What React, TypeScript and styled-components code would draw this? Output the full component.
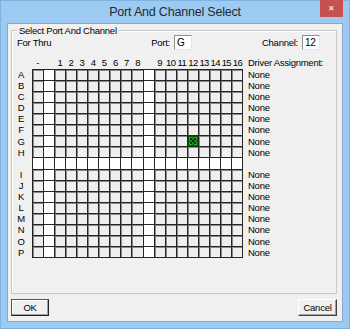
import React from 'react'
import styled, { createGlobalStyle } from 'styled-components'

const columns = ['-', '', '1', '2', '3', '4', '5', '6', '7', '8', '', '9', '10', '11', '12', '13', '14', '15', '16']
const rows = ['A', 'B', 'C', 'D', 'E', 'F', 'G', 'H', '', 'I', 'J', 'K', 'L', 'M', 'N', 'O', 'P']

const selectedRow = 'G'
const selectedCol = '12'

const App = () => {
  return (
    <>
      <GlobalStyle />
      <Window>
        <TitleBar>
          <span />
          <Title>Port And Channel Select</Title>
          <CloseButton>✕</CloseButton>
        </TitleBar>
        <Client>
          <GroupBox>
            <Legend>Select Port And Channel</Legend>
            <TopRow>
              <Label $grow>For Thru</Label>
              <Field>
                <Label>Port:</Label>
                <TextBox>G</TextBox>
              </Field>
              <Field $offset={70}>
                <Label>Channel:</Label>
                <TextBox>12</TextBox>
              </Field>
            </TopRow>

            <HeaderRow>
              <Corner />
              <ColHeaders>
                {columns.map((c, i) => (
                  <HeadCell key={i}>{c}</HeadCell>
                ))}
              </ColHeaders>
              <AssignHead>Driver Assignment:</AssignHead>
            </HeaderRow>

            <GridRow>
              <RowLabels>
                {rows.map((r, i) => (
                  <RowLabel key={i}>{r}</RowLabel>
                ))}
              </RowLabels>
              <Board>
                {rows.map((r, ri) =>
                  columns.map((c, ci) => {
                    const blank = r === '' || c === ''
                    const picked = r === selectedRow && c === selectedCol
                    return (
                      <Cell key={ri + '-' + ci} $white={blank}>
                        {picked && (
                          <svg width="100%" height="100%" viewBox="0 0 10 10" style={{ display: 'block' }}>
                            <rect x="0" y="0" width="10" height="10" fill="#0fcc0f" />
                            <rect x="0.5" y="0.5" width="9" height="9" fill="none" stroke="#075507" strokeWidth="1" />
                            <circle cx="5" cy="5" r="3.2" fill="none" stroke="#0b2a0b" strokeWidth="0.8" />
                            <path d="M2.4 2.4 L7.6 7.6 M7.6 2.4 L2.4 7.6" stroke="#0a0f0a" strokeWidth="1.1" />
                          </svg>
                        )}
                      </Cell>
                    )
                  })
                )}
              </Board>
              <Assignments>
                {rows.map((r, i) => (
                  <RowLabel key={i} $left>{r ? 'None' : ''}</RowLabel>
                ))}
              </Assignments>
            </GridRow>
          </GroupBox>

          <ButtonRow>
            <PushButton $default $w={38}>OK</PushButton>
            <PushButton $w={39}>Cancel</PushButton>
          </ButtonRow>
        </Client>
      </Window>
    </>
  )
}

export default App

const GlobalStyle = createGlobalStyle`
    html, body {
        margin: 0;
        padding: 0;
        background: #ffffff;
    }
`
const Window = styled.div`
    width: 350px;
    height: 329px;
    box-sizing: border-box;
    background-color: #9ccaf1;
    border: 1px solid #7eb2e0;
    padding: 0 6px 6px 6px;
    display: flex;
    flex-direction: column;
    font-family: "Liberation Sans", Arial, sans-serif;
`
const TitleBar = styled.div`
    height: 22px;
    display: grid;
    grid-template-columns: 1fr auto 1fr;
    align-items: start;
`
const Title = styled.div`
    font-family: "Liberation Sans", Arial, sans-serif;
    font-size: 12.5px;
    color: #1e2a36;
    line-height: 22px;
    letter-spacing: -0.2px;
`
const CloseButton = styled.div`
    justify-self: end;
    width: 23px;
    height: 17px;
    margin-top: -1px;
    background-color: #c75050;
    color: #ffffff;
    font-size: 8px;
    display: flex;
    align-items: center;
    justify-content: center;
`
const Client = styled.div`
    flex: 1;
    background-color: #f0f0f0;
    border: 1px solid #86a9c8;
    padding: 0 5px 0 3px;
    display: flex;
    flex-direction: column;
    font-size: 9.5px;
    letter-spacing: -0.25px;
    color: #000;
`
const GroupBox = styled.div`
    position: relative;
    margin-top: 6px;
    height: 264px;
    box-sizing: border-box;
    border: 1px solid #c9c9c9;
    box-shadow: inset 1px 1px 0 #ffffff;
    padding: 0 0 0 1px;
`
const Legend = styled.span`
    position: absolute;
    top: -6px;
    left: 5px;
    padding: 0 2px;
    background-color: #f0f0f0;
    line-height: 11px;
`
const TopRow = styled.div`
    display: flex;
    align-items: center;
    height: 15px;
    margin-top: 4px;
    padding: 0 16px 0 4px;
`
const Label = styled.span<{ $grow?: boolean }>`
    flex: ${p => (p.$grow ? 1 : 'none')};
    white-space: nowrap;
`
const Field = styled.div<{ $offset?: number }>`
    display: flex;
    align-items: center;
    gap: 4px;
    margin-left: ${p => p.$offset || 0}px;
`
const TextBox = styled.div`
    width: 18px;
    height: 15px;
    box-sizing: border-box;
    background-color: #ffffff;
    border: 1px solid;
    border-color: #8f8f8f #e3e3e3 #e3e3e3 #8f8f8f;
    padding-left: 2px;
    line-height: 13px;
    font-size: 10px;
`
const HeaderRow = styled.div`
    display: flex;
    align-items: center;
    height: 13px;
    margin-top: 6px;
`
const Corner = styled.div`
    width: 19px;
`
const ColHeaders = styled.div`
    width: 211px;
    display: grid;
    grid-template-columns: repeat(19, 1fr);
`
const HeadCell = styled.div`
    text-align: center;
    white-space: nowrap;
    letter-spacing: -0.6px;
`
const AssignHead = styled.div`
    margin-left: 5px;
    white-space: nowrap;
`
const GridRow = styled.div`
    display: flex;
`
const RowLabels = styled.div`
    width: 19px;
    height: 189px;
    display: grid;
    grid-template-rows: repeat(17, 1fr);
`
const RowLabel = styled.div<{ $left?: boolean }>`
    display: flex;
    align-items: center;
    justify-content: ${p => (p.$left ? 'flex-start' : 'center')};
    padding-right: ${p => (p.$left ? 0 : 3)}px;
    line-height: 1;
`
const Board = styled.div`
    width: 211px;
    height: 189px;
    box-sizing: border-box;
    display: grid;
    grid-template-columns: repeat(19, 1fr);
    grid-template-rows: repeat(17, 1fr);
    gap: 1px;
    padding: 1px;
    background-color: #262626;
`
const Cell = styled.div<{ $white?: boolean }>`
    background-color: ${p => (p.$white ? '#ffffff' : '#efefef')};
    box-shadow: inset 1px 1px 0 ${p => (p.$white ? '#ffffff' : '#8a8a8a')};
    overflow: hidden;
`
const Assignments = styled.div`
    margin-left: 5px;
    height: 189px;
    display: grid;
    grid-template-rows: repeat(17, 1fr);
`
const ButtonRow = styled.div`
    display: flex;
    justify-content: space-between;
    margin-top: 5px;
    padding-right: 0;
`
const PushButton = styled.button<{ $default?: boolean; $w: number }>`
    width: ${p => p.$w}px;
    height: 17px;
    padding: 0;
    font-family: "Liberation Sans", Arial, sans-serif;
    font-size: 9.5px;
    letter-spacing: -0.25px;
    color: #000;
    background-color: #f0f0f0;
    border: 1px solid;
    border-color: ${p => (p.$default ? '#555 #222 #222 #555' : '#fff #444 #444 #fff')};
    box-shadow: inset -1px -1px 0 #a0a0a0 ${p => (p.$default ? ', inset 1px 1px 0 #fff' : '')};
`
